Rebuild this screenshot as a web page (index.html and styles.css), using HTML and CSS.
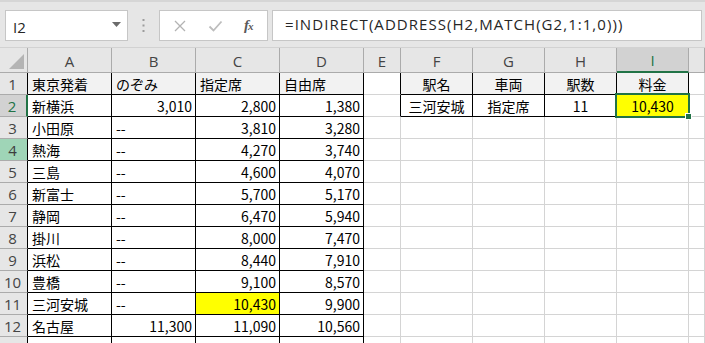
FILE: index.html
```html
<!DOCTYPE html>
<html lang="ja">
<head>
<meta charset="utf-8">
<link rel="stylesheet" href="styles.css">
</head>
<body>
<div class="app">
  <div class="fbar">
    <div class="namebox">
      <span class="nb-text">I2</span>
      <svg class="nb-arrow" width="9" height="5" viewBox="0 0 9 5"><path d="M0 0h9L4.5 5z" fill="#6b6b6b"/></svg>
    </div>
    <div class="dots">
      <svg width="3" height="13" viewBox="0 0 3 13"><rect x="0.5" y="0" width="2" height="2" fill="#9c9c9c"/><rect x="0.5" y="5.5" width="2" height="2" fill="#9c9c9c"/><rect x="0.5" y="11" width="2" height="2" fill="#9c9c9c"/></svg>
    </div>
    <div class="btns">
      <svg class="ic" width="14" height="14" viewBox="0 0 14 14"><path d="M2 2L12 12M12 2L2 12" stroke="#b3b3b3" stroke-width="1.3" fill="none"/></svg>
      <svg class="ic" width="15" height="14" viewBox="0 0 15 14"><path d="M1.5 7.5L5.5 11.5L13.5 2.5" stroke="#bdbdbd" stroke-width="1.8" fill="none"/></svg>
      <span class="fx">f<span class="fx-x">x</span></span>
    </div>
    <div class="formula">=INDIRECT(ADDRESS(H2,MATCH(G2,1:1,0)))</div>
  </div>

  <div class="sheet">
    <!-- header row -->
    <div class="ch corner"><span class="tri"></span></div>
    <div class="ch">A</div>
    <div class="ch">B</div>
    <div class="ch">C</div>
    <div class="ch">D</div>
    <div class="ch">E</div>
    <div class="ch">F</div>
    <div class="ch">G</div>
    <div class="ch">H</div>
    <div class="ch ch-sel">I</div>
    <div class="ch"></div>

    <!-- row 1 -->
    <div class="rh rh-t">1</div>
    <div class="c t hd">東京発着</div>
    <div class="c t hd">のぞみ</div>
    <div class="c t hd">指定席</div>
    <div class="c t hd">自由席</div>
    <div class="c tl"></div>
    <div class="c t hd ctr">駅名</div>
    <div class="c t hd ctr">車両</div>
    <div class="c t hd ctr">駅数</div>
    <div class="c t hd ctr">料金</div>
    <div class="c"></div>

    <!-- row 2 -->
    <div class="rh rh-sel">2</div>
    <div class="c t">新横浜</div>
    <div class="c t num">3,010</div>
    <div class="c t num">2,800</div>
    <div class="c t num">1,380</div>
    <div class="c tl"></div>
    <div class="c t ctr">三河安城</div>
    <div class="c t ctr">指定席</div>
    <div class="c t ctr">11</div>
    <div class="c t ctr yel sel">10,430</div>
    <div class="c"></div>

    <!-- row 3 -->
    <div class="rh rh-t">3</div>
    <div class="c t">小田原</div>
    <div class="c t">--</div>
    <div class="c t num">3,810</div>
    <div class="c t num">3,280</div>
    <div class="c"></div><div class="c"></div><div class="c"></div><div class="c"></div><div class="c"></div><div class="c"></div>

    <!-- row 4 -->
    <div class="rh rh-t rh-hi">4</div>
    <div class="c t">熱海</div>
    <div class="c t">--</div>
    <div class="c t num">4,270</div>
    <div class="c t num">3,740</div>
    <div class="c"></div><div class="c"></div><div class="c"></div><div class="c"></div><div class="c"></div><div class="c"></div>

    <!-- row 5 -->
    <div class="rh rh-t">5</div>
    <div class="c t">三島</div>
    <div class="c t">--</div>
    <div class="c t num">4,600</div>
    <div class="c t num">4,070</div>
    <div class="c"></div><div class="c"></div><div class="c"></div><div class="c"></div><div class="c"></div><div class="c"></div>

    <!-- row 6 -->
    <div class="rh rh-t">6</div>
    <div class="c t">新富士</div>
    <div class="c t">--</div>
    <div class="c t num">5,700</div>
    <div class="c t num">5,170</div>
    <div class="c"></div><div class="c"></div><div class="c"></div><div class="c"></div><div class="c"></div><div class="c"></div>

    <!-- row 7 -->
    <div class="rh rh-t">7</div>
    <div class="c t">静岡</div>
    <div class="c t">--</div>
    <div class="c t num">6,470</div>
    <div class="c t num">5,940</div>
    <div class="c"></div><div class="c"></div><div class="c"></div><div class="c"></div><div class="c"></div><div class="c"></div>

    <!-- row 8 -->
    <div class="rh rh-t">8</div>
    <div class="c t">掛川</div>
    <div class="c t">--</div>
    <div class="c t num">8,000</div>
    <div class="c t num">7,470</div>
    <div class="c"></div><div class="c"></div><div class="c"></div><div class="c"></div><div class="c"></div><div class="c"></div>

    <!-- row 9 -->
    <div class="rh rh-t">9</div>
    <div class="c t">浜松</div>
    <div class="c t">--</div>
    <div class="c t num">8,440</div>
    <div class="c t num">7,910</div>
    <div class="c"></div><div class="c"></div><div class="c"></div><div class="c"></div><div class="c"></div><div class="c"></div>

    <!-- row 10 -->
    <div class="rh rh-t">10</div>
    <div class="c t">豊橋</div>
    <div class="c t">--</div>
    <div class="c t num">9,100</div>
    <div class="c t num">8,570</div>
    <div class="c"></div><div class="c"></div><div class="c"></div><div class="c"></div><div class="c"></div><div class="c"></div>

    <!-- row 11 -->
    <div class="rh rh-t">11</div>
    <div class="c t">三河安城</div>
    <div class="c t">--</div>
    <div class="c t num yel">10,430</div>
    <div class="c t num">9,900</div>
    <div class="c"></div><div class="c"></div><div class="c"></div><div class="c"></div><div class="c"></div><div class="c"></div>

    <!-- row 12 -->
    <div class="rh rh-t">12</div>
    <div class="c t">名古屋</div>
    <div class="c t num">11,300</div>
    <div class="c t num">11,090</div>
    <div class="c t num">10,560</div>
    <div class="c"></div><div class="c"></div><div class="c"></div><div class="c"></div><div class="c"></div><div class="c"></div>

    <!-- row 13 (only its top edge is visible) -->
    <div class="rh rh-t"></div>
    <div class="c t"></div>
    <div class="c t"></div>
    <div class="c t"></div>
    <div class="c t"></div>
    <div class="c"></div><div class="c"></div><div class="c"></div><div class="c"></div><div class="c"></div><div class="c"></div>
  </div>
</div>
</body>
</html>
```

FILE: styles.css
```css
* { box-sizing: border-box; }
html, body { margin: 0; padding: 0; }
body {
  width: 705px;
  height: 343px;
  overflow: hidden;
  background: #ffffff;
  font-family: "Noto Sans CJK JP", sans-serif;
}
.app {
  width: 705px;
  height: 343px;
  overflow: hidden;
}

/* formula bar */
.fbar {
  height: 48px;
  background: #e6e6e6;
  border-top: 2px solid #d6d6d6;
  border-bottom: 1px solid #d2d2d2;
  display: flex;
  align-items: flex-start;
  padding: 8px 0 0 5px;
}
.namebox {
  width: 123px;
  height: 31px;
  background: #fff;
  border: 1px solid #c6c6c6;
  display: flex;
  align-items: center;
  justify-content: space-between;
  padding: 0 6px 0 7px;
}
.nb-text {
  font-family: "Open Sans", "Noto Sans", sans-serif;
  font-size: 15px;
  color: #262626;
  padding-top: 2px;
}
.nb-arrow { margin-top: -3px; }
.dots {
  width: 31px;
  height: 31px;
  display: flex;
  align-items: center;
  justify-content: center;
}
.btns {
  width: 109px;
  height: 31px;
  background: #fff;
  border: 1px solid #c6c6c6;
  display: flex;
  align-items: center;
  padding-left: 13px;
}
.btns .ic:first-child { margin-right: 21px; }
.btns .ic:nth-child(2) { margin-right: 21px; }
.fx {
  font-family: "Liberation Serif", "DejaVu Serif", serif;
  font-style: italic;
  font-weight: bold;
  font-size: 15px;
  color: #5a5a5a;
  letter-spacing: -1px;
}
.fx-x { font-size: 11px; }
.formula {
  margin-left: 4px;
  flex: 1;
  height: 31px;
  margin-right: 3px;
  background: #fff;
  border: 1px solid #c6c6c6;
  font-family: "Open Sans", "Noto Sans", sans-serif;
  font-size: 15px;
  letter-spacing: 1.05px;
  color: #262626;
  padding: 3px 0 0 12px;
  white-space: nowrap;
}

/* sheet grid */
.sheet {
  display: grid;
  grid-template-columns: 28px 84px 84px 84px 84px 37px 72px 72px 72px 72px 1fr;
  grid-template-rows: 25px repeat(13, 22px);
}
.ch {
  background: #e6e6e6;
  border-right: 1px solid #ababab;
  border-bottom: 1px solid #ababab;
  font-family: "Open Sans", "Noto Sans", sans-serif;
  font-size: 15px;
  color: #444;
  display: flex;
  align-items: center;
  justify-content: center;
  padding-top: 1px;
}
.corner { position: relative; }
.tri {
  position: absolute;
  right: 3px;
  bottom: 3px;
  width: 0;
  height: 0;
  border-left: 15px solid transparent;
  border-bottom: 15px solid #b4b4b4;
}
.ch-sel {
  background: #d2d2d2;
  color: #217346;
  border-bottom: 2px solid #217346;
}
.rh {
  background: #e6e6e6;
  border-right: 1px solid #ababab;
  border-bottom: 1px solid #ababab;
  font-family: "Open Sans", "Noto Sans", sans-serif;
  font-size: 15px;
  color: #444;
  display: flex;
  align-items: center;
  justify-content: center;
  padding-right: 2px;
}
.rh-t { border-right: 1px solid #000; }
.rh-sel {
  background: #d2d2d2;
  color: #217346;
  border-right: 2px solid #217346;
}
.rh-hi { background: #9fd5b7; color: #3d3d3d; }

.c {
  border-right: 1px solid #d4d4d4;
  border-bottom: 1px solid #d4d4d4;
  font-size: 14px;
  color: #000;
  display: flex;
  align-items: center;
  padding: 1px 3px 0 4px;
  white-space: nowrap;
}
.t {
  border-right: 1px solid #000;
  border-bottom: 1px solid #000;
}
.tl { border-right: 1px solid #000; }
.hd { background: #f2f2f2; }
.num { justify-content: flex-end; }
.ctr { justify-content: center; padding-left: 0; padding-right: 0; }
.yel { background: #ffff00; }
.sel { position: relative; }
.sel::before {
  content: "";
  position: absolute;
  left: -2px;
  top: -2px;
  right: -2px;
  bottom: -2px;
  border: 2px solid #217346;
}
.sel::after {
  content: "";
  position: absolute;
  right: -4px;
  bottom: -4px;
  width: 5px;
  height: 5px;
  background: #217346;
  border: 1px solid #fff;
  box-sizing: content-box;
}
```
